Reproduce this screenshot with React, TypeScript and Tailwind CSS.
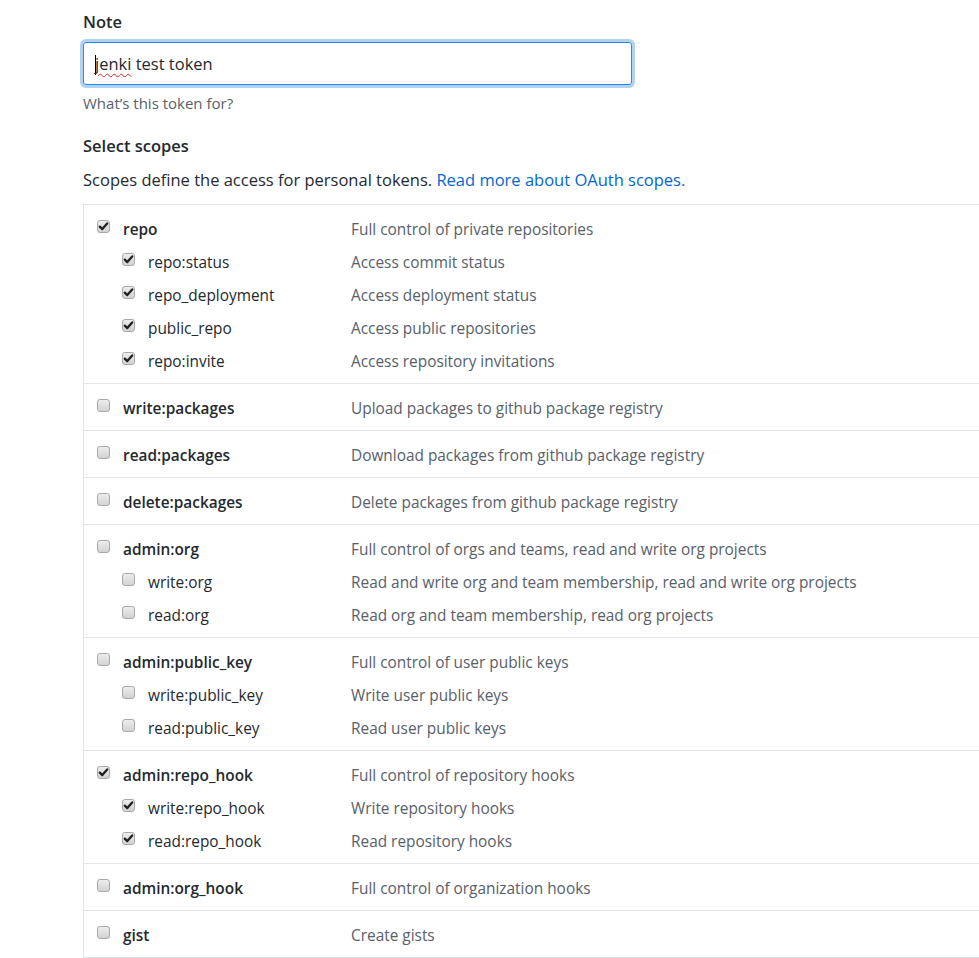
import React from "react";

type Scope = { name: string; desc: string; checked: boolean; children?: { name: string; desc: string; checked: boolean }[] };

const scopes: Scope[] = [
  {
    name: "repo",
    desc: "Full control of private repositories",
    checked: true,
    children: [
      { name: "repo:status", desc: "Access commit status", checked: true },
      { name: "repo_deployment", desc: "Access deployment status", checked: true },
      { name: "public_repo", desc: "Access public repositories", checked: true },
      { name: "repo:invite", desc: "Access repository invitations", checked: true },
    ],
  },
  { name: "write:packages", desc: "Upload packages to github package registry", checked: false },
  { name: "read:packages", desc: "Download packages from github package registry", checked: false },
  { name: "delete:packages", desc: "Delete packages from github package registry", checked: false },
  {
    name: "admin:org",
    desc: "Full control of orgs and teams, read and write org projects",
    checked: false,
    children: [
      { name: "write:org", desc: "Read and write org and team membership, read and write org projects", checked: false },
      { name: "read:org", desc: "Read org and team membership, read org projects", checked: false },
    ],
  },
  {
    name: "admin:public_key",
    desc: "Full control of user public keys",
    checked: false,
    children: [
      { name: "write:public_key", desc: "Write user public keys", checked: false },
      { name: "read:public_key", desc: "Read user public keys", checked: false },
    ],
  },
  {
    name: "admin:repo_hook",
    desc: "Full control of repository hooks",
    checked: true,
    children: [
      { name: "write:repo_hook", desc: "Write repository hooks", checked: true },
      { name: "read:repo_hook", desc: "Read repository hooks", checked: true },
    ],
  },
  { name: "admin:org_hook", desc: "Full control of organization hooks", checked: false },
  { name: "gist", desc: "Create gists", checked: false },
];

function Box({ checked }: { checked: boolean }) {
  return (
    <span className="mb-[5px] flex h-[13px] w-[13px] shrink-0 items-center justify-center rounded-[3px] border border-[#a9a9a9] bg-gradient-to-b from-[#ededed] to-[#d2d2d2]">
      {checked && (
        <svg width="11" height="11" viewBox="0 0 11 11">
          <path d="M1.8 5.6 L4.3 8.1 L9.2 2.4" fill="none" stroke="#222" strokeWidth="2.3" strokeLinecap="round" strokeLinejoin="round" />
        </svg>
      )}
    </span>
  );
}

function Line({ name, desc, checked, child }: { name: string; desc: string; checked: boolean; child?: boolean }) {
  return (
    <div className="flex h-[33px] items-center pl-[13px]">
      <div className={`flex w-[254px] items-center gap-[13px] ${child ? "pl-[25px]" : ""}`}>
        <Box checked={checked} />
        <span className={child ? "text-[#24292e]" : "font-semibold text-[#24292e]"}>{name}</span>
      </div>
      <span className="text-[#586069]">{desc}</span>
    </div>
  );
}

export default function App() {
  return (
    <div className="h-[958px] w-full overflow-hidden bg-white font-['Open_Sans',sans-serif] text-[#24292e]">
      <div className="pl-[83px] pt-[10px]">
        <div className="h-[24px] text-[16.5px] font-semibold leading-[24px]">Note</div>
        <div className="mt-[8px] flex h-[43px] w-[549px] items-center rounded-[3px] border border-[#2188ff] pl-[11px] shadow-[0_0_0_3px_rgba(3,102,214,0.3)]">
          <span className="text-[16.5px] leading-[24px]">
            <span className="-mr-px inline-block h-[20px] w-px bg-black align-middle" />
            <span className="underline decoration-[#e0241f] decoration-wavy decoration-1 underline-offset-[3px]">jenki</span> test token
          </span>
        </div>
        <div className="mt-[8px] h-[20px] text-[15px] leading-[20px] text-[#586069]">What’s this token for?</div>
        <div className="mt-[21px] h-[24px] text-[16.5px] font-semibold leading-[24px]">Select scopes</div>
        <div className="mt-[10px] h-[24px] text-[16.5px] leading-[24px]">
          Scopes define the access for personal tokens. <span className="text-[#0366d6]">Read more about OAuth scopes.</span>
        </div>
        <div className="mt-[12px] w-[920px] border-l border-t border-[#e1e4e8] text-[15.4px]">
          {scopes.map((s) => (
            <div key={s.name} className="border-b border-[#e1e4e8] pb-[5px] pt-[8px]">
              <Line name={s.name} desc={s.desc} checked={s.checked} />
              {s.children?.map((c) => (
                <Line key={c.name} name={c.name} desc={c.desc} checked={c.checked} child />
              ))}
            </div>
          ))}
        </div>
      </div>
    </div>
  );
}
